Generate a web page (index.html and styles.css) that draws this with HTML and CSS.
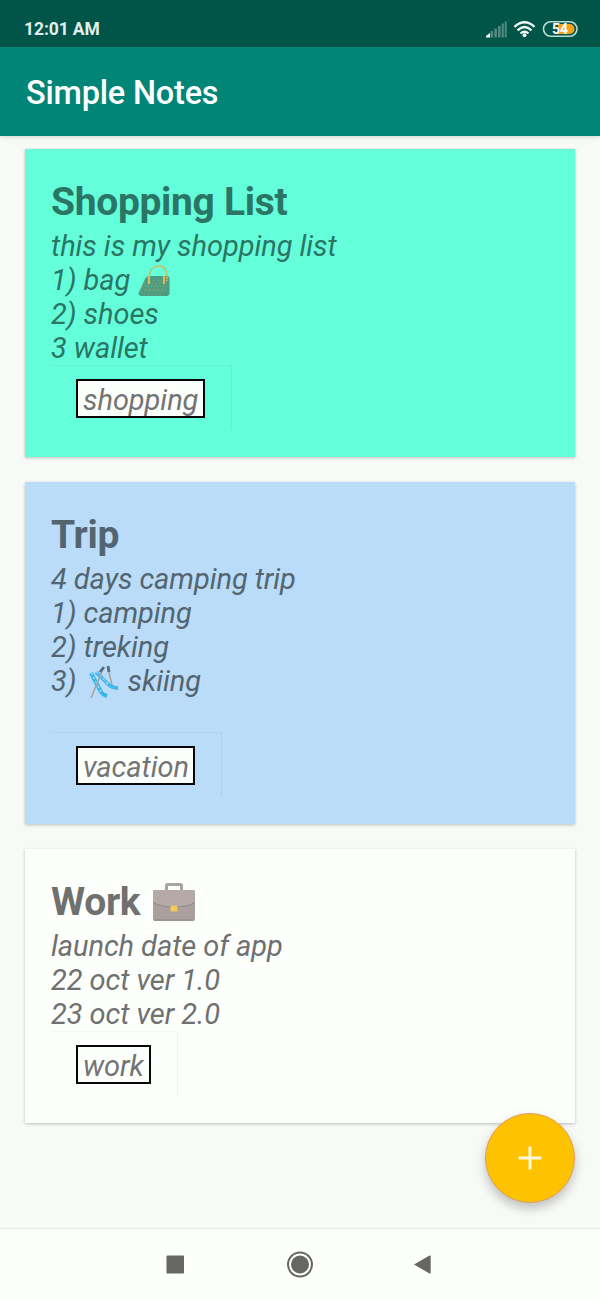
FILE: index.html
```html
<!DOCTYPE html>
<html lang="en">
<head>
<meta charset="utf-8">
<title>Simple Notes</title>
<link rel="stylesheet" href="styles.css">
</head>
<body>
<div class="screen">
  <header class="status">
    <span class="clock">12:01 AM</span>
    <svg class="indicators" width="98" height="24" viewBox="0 0 98 24">
      <g fill="#4f8a7f">
        <rect x="5.500" y="14" width="2.600" height="6.500"/><rect x="9.300" y="11.500" width="2.600" height="9"/><rect x="13" y="9" width="2.600" height="11.500"/><rect x="16.600" y="6.500" width="2.200" height="14"/><rect x="19.700" y="4.500" width="2" height="16"/>
      </g>
      <path d="M1 20.500v-1.500L5 16v4.500z" fill="#fff"/>
      <g fill="none" stroke="#f2f8f6" stroke-width="2.300">
        <path d="M29.500 9.800Q39.500 .8 49.500 9.800"/><path d="M32.500 13.300Q39.500 6.800 46.500 13.300"/><path d="M35.500 16.500Q39.500 13 43.500 16.500"/>
      </g>
      <circle cx="39.500" cy="18.200" r="1.900" fill="#fff"/>
      <rect x="58.500" y="4.800" width="33.500" height="14.500" rx="7.250" fill="none" stroke="#bddbd3" stroke-width="1.600"/>
      <path d="M73 7h11.500a5 5 0 0 1 0 10H73z" fill="#f8a11e"/>
      <text class="level" x="67" y="17">54</text>
    </svg>
  </header>
  <div class="toolbar"><h1>Simple Notes</h1></div>
  <main class="notes">
    <article class="card mint">
      <h2 class="title">Shopping List</h2>
      <p class="line">this is my shopping list</p>
      <p class="line">1) bag
        <svg class="bag" width="34" height="34" viewBox="0 0 34 34"><path d="M1.500 29 8 15q1.500-3 5-3h17q2.500 0 2.500 3v14q0 3-3 3H4.500q-3 0-3-3z" fill="#4b9c82"/><path d="M3 29 9 16m-2 14 6-14m-2 15 6-15m-2 15 6-15m-2 15 5-15m-1 15 5-14M5 22h25M4 26h27" stroke="#b3a65c" stroke-width=".8" stroke-dasharray="1 2"/><path d="M12 19v-7Q14 2 22 2q7 0 8 10v5" fill="none" stroke="#d2b65d" stroke-width="1.700" stroke-dasharray="2.500 .6"/><path d="M12 12v8m15-8v8" stroke="#ddb955" stroke-width="2.200"/></svg>
      </p>
      <p class="line">2) shoes</p>
      <p class="line">3 wallet</p>
      <div class="tagbox w1"><span class="tag">shopping</span></div>
    </article>
    <article class="card sky">
      <h2 class="title">Trip</h2>
      <p class="line">4 days camping trip</p>
      <p class="line">1) camping</p>
      <p class="line">2) treking</p>
      <p class="line">3)
        <svg class="ski" width="32" height="34" viewBox="0 0 32 34"><path d="M3 8 13 27q2 3 6 4" fill="none" stroke="#36b5e7" stroke-width="4"/><path d="M8 7 20 19q4 4 10 4" fill="none" stroke="#42b7eb" stroke-width="3.800"/><path d="M3 7 13 27m-5-21 12 13" stroke="#a9dafa" stroke-width="1.300" stroke-dasharray="3 2"/><path d="M15 4 3 33M20 3l4 17" stroke="#a5a3a2" stroke-width="1.500"/><path d="m12 7 4-5m4-1 1 6" stroke="#566a78" stroke-width="2.800"/></svg>
        skiing</p>
      <p class="line">&nbsp;</p>
      <div class="tagbox w2"><span class="tag">vacation</span></div>
    </article>
    <article class="card white">
      <h2 class="title">Work
        <svg class="case" width="44" height="40" viewBox="0 0 44 40"><path d="M14.500 9V3.500q0-1 1-1h13q1 0 1 1V9" fill="none" stroke="#aba3a0" stroke-width="3"/><rect x="1" y="8" width="42" height="31" rx="2" fill="#aaa09d"/><path d="M1 9q0-1 2-1h38q2 0 2 2v10q-6 5-21 5T1 20z" fill="#b4aaa7"/><path d="M1 20q6 5 21 5t21-5M2 38h40" fill="none" stroke="#918783"/><path d="M5 12h34M3 16h38M4 20h36M3 29h38M4 33h36" stroke="#cd9baa" stroke-width=".8" stroke-dasharray="1 4"/><rect x="18.500" y="23.500" width="7" height="6" rx="1" fill="#f3c75c"/></svg>
      </h2>
      <p class="line">launch date of app</p>
      <p class="line">22 oct ver 1.0</p>
      <p class="line">23 oct ver 2.0</p>
      <div class="tagbox w3"><span class="tag">work</span></div>
    </article>
  </main>
  <button class="fab" aria-label="Add note">
    <svg width="24" height="24" viewBox="0 0 24 24"><path d="M12 .5v23M.5 12h23" stroke="#fff8dc" stroke-width="3"/></svg>
  </button>
  <nav class="navbar">
    <svg width="28" height="28" viewBox="0 0 28 28"><rect x="5.500" y="5.500" width="17.500" height="18" rx=".8" fill="#666764"/></svg>
    <svg width="28" height="28" viewBox="0 0 28 28"><circle cx="14" cy="14.500" r="12" fill="none" stroke="#666764" stroke-width="2"/><circle cx="14" cy="14.500" r="9" fill="#666764"/></svg>
    <svg width="28" height="28" viewBox="0 0 28 28"><path d="M3 14.500 18.500 5.500Q19.700 5 19.700 6.500v16q0 1.500-1.200 1z" fill="#666764"/></svg>
  </nav>
</div>
</body>
</html>
```
FILE: styles.css
```css
* { box-sizing: border-box; }
body { margin: 0; font-family: Roboto, sans-serif; }
h1, h2, p { margin: 0; }
.screen {
  position: relative;
  display: flex;
  flex-direction: column;
  width: 600px;
  height: 1300px;
  overflow: hidden;
  background: #f8faf8;
}
.status {
  display: flex;
  justify-content: space-between;
  height: 47px;
  padding: 17px 17px 0 24px;
  background: #005548;
}
.clock { font-size: 17.5px; line-height: 25px; font-weight: 700; letter-spacing: -.1px; color: #e3efec; }
.level { font-size: 14px; font-weight: 700; fill: #fff; }
.toolbar {
  height: 89px;
  padding: 0 26px;
  background: #008577;
  box-shadow: 0 1px 4px rgba(0, 0, 0, .15);
}
.toolbar h1 { font-size: 32.5px; line-height: 92px; font-weight: 500; letter-spacing: -.2px; color: #fff; }
.notes {
  display: flex;
  flex: 1;
  flex-direction: column;
  gap: 25px;
  padding: 13px 25px 0;
}
.card {
  padding: 26px;
  color: #6f706f;
  box-shadow: 0 1px 3px rgba(0, 0, 0, .24);
}
.mint { background: #64ffda; color: #2b7565; }
.sky { background: #badcf9; color: #536570; }
.white { background: #fdfffc; }
.title {
  height: 54px;
  font-size: 39px;
  line-height: 54px;
  font-weight: 700;
  letter-spacing: -.33px;
  white-space: nowrap;
}
.line {
  height: 34px;
  font-size: 29px;
  line-height: 34px;
  font-style: italic;
  letter-spacing: -.06px;
  white-space: nowrap;
}
.bag { vertical-align: -8px; }
.ski { margin: 0 1px 0 4px; vertical-align: -8px; }
.case { margin-left: 2px; vertical-align: -7px; }
.tagbox {
  height: 65px;
  margin-bottom: 1px;
  padding: 13px 26px 0 25px;
  border-top: 1px solid rgba(0, 0, 0, .035);
  border-right: 1px solid rgba(0, 0, 0, .05);
}
.tag {
  display: block;
  height: 39px;
  padding-left: 5px;
  border: 2px solid #080808;
  background: #fdfffc;
  font-size: 29px;
  line-height: 38px;
  font-style: italic;
  letter-spacing: -.06px;
  color: #737473;
}
.w1 { width: 181px; }
.w2 { width: 171px; }
.w3 { width: 127px; }
.fab {
  position: absolute;
  right: 25px;
  top: 1113px;
  display: grid;
  place-items: center;
  width: 90px;
  height: 90px;
  padding: 0;
  border: 1px solid #e29a5c;
  border-radius: 50%;
  background: #fdc300;
  box-shadow: 0 6px 10px rgba(0, 0, 0, .18), 0 3px 16px rgba(0, 0, 0, .06);
}
.navbar {
  display: flex;
  justify-content: center;
  gap: 97px;
  height: 72px;
  padding-top: 21px;
  border-top: 1px solid #e8eae8;
  background: #fdfffc;
}
```
